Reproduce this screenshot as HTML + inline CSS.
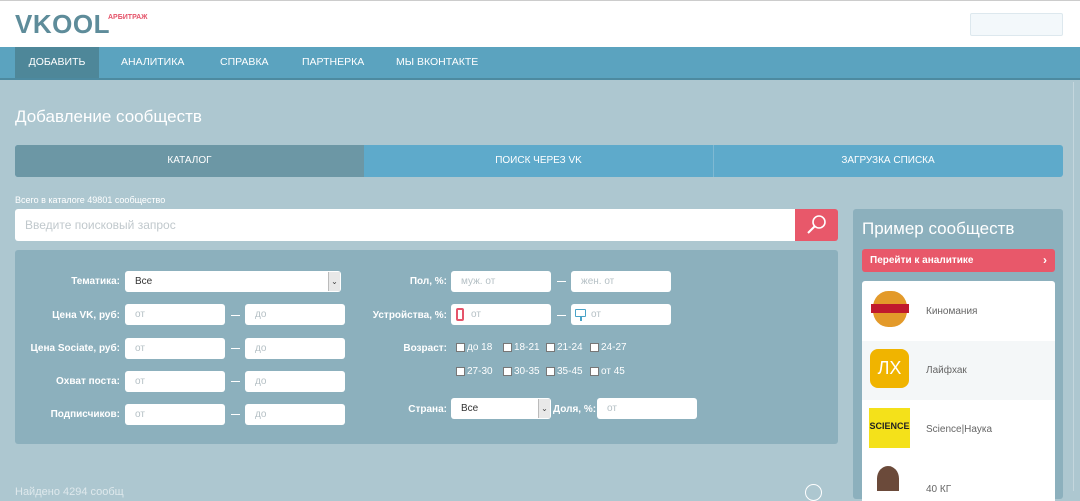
<!DOCTYPE html>
<html><head><meta charset="utf-8"><style>
*{margin:0;padding:0;box-sizing:border-box}
body{width:1080px;height:491px;overflow:hidden;background:#adc7d0;font-family:"Liberation Sans",sans-serif;position:relative}
.a{position:absolute}
.hdr{left:0;top:0;width:1080px;height:47px;background:#fff;border-top:1px solid #ccc}
.nav{left:0;top:47px;width:1080px;height:33px;background:#5ba3bf;border-bottom:2px solid #4d8aa0}
.nav span{position:absolute;top:0;height:31px;line-height:31px;color:#fff;font-size:10.5px}
.lbl{color:#fff;font-size:10px;font-weight:bold;text-align:right;white-space:nowrap}
.in{background:#fff;border-radius:3px;height:21px;color:#b5c0c5;font-size:10px;line-height:21px;padding-left:10px}
.dash{width:9px;height:1px;background:#fff}
.cb{width:9px;height:9px;background:#fff;border:1px solid #777}
.ct{color:#fff;font-size:10px}
</style></head><body>
<div class="a hdr"></div>
<div class="a" style="left:15px;top:9px;font-size:26px;font-weight:bold;color:#5e8c9a;letter-spacing:0.5px">VKOOL</div>
<div class="a" style="left:108px;top:14px;font-size:7px;font-weight:bold;color:#e5546a">АРБИТРАЖ</div>
<div class="a" style="left:970px;top:13px;width:93px;height:23px;border:1px solid #dde8ee;background:#f3f8fb;border-radius:2px"></div>
<div class="a nav">
<span style="left:15px;width:84px;background:#4e8799;text-align:center">ДОБАВИТЬ</span>
<span style="left:121px">АНАЛИТИКА</span>
<span style="left:220px">СПРАВКА</span>
<span style="left:302px">ПАРТНЕРКА</span>
<span style="left:396px">МЫ ВКОНТАКТЕ</span>
</div>
<div class="a" style="left:1073px;top:82px;width:1px;height:409px;background:#c4d6dd"></div>
<div class="a" style="left:15px;top:107px;font-size:17px;color:#fff">Добавление сообществ</div>
<div class="a" style="left:15px;top:145px;width:1048px;height:32px;border-radius:3px;overflow:hidden;background:#5eaacb">
<div class="a" style="left:0;top:0;width:349px;height:32px;background:#6c97a5"></div>
<div class="a ct" style="left:0;width:349px;top:10px;text-align:center">КАТАЛОГ</div>
<div class="a ct" style="left:349px;width:349px;top:10px;text-align:center">ПОИСК ЧЕРЕЗ VK</div>
<div class="a" style="left:698px;top:0;width:1px;height:32px;background:#7fb9d3"></div>
<div class="a ct" style="left:698px;width:350px;top:10px;text-align:center">ЗАГРУЗКА СПИСКА</div>
</div>
<div class="a" style="left:15px;top:195px;font-size:9px;color:#fff">Всего в каталоге 49801 сообщество</div>
<div class="a" style="left:15px;top:209px;width:781px;height:32px;background:#fff;border-radius:3px 0 0 3px;color:#c0c8cc;font-size:12px;line-height:32px;padding-left:10px">Введите поисковый запрос</div>
<div class="a" style="left:795px;top:209px;width:43px;height:32px;background:#e8586a;border-radius:0 3px 3px 0">
<svg width="43" height="32"><circle cx="24" cy="13" r="6" fill="none" stroke="#fff" stroke-width="1.6"/><line x1="19.5" y1="17.5" x2="13" y2="24" stroke="#fff" stroke-width="2"/></svg></div>
<div class="a" style="left:15px;top:250px;width:823px;height:194px;background:#8cb0bd;border-radius:3px"></div>
<div class="a lbl" style="left:0;width:120px;top:276px">Тематика:</div>
<div class="a in" style="left:125px;top:271px;width:216px;color:#333">Все</div>
<div class="a" style="left:328px;top:272px;width:12px;height:19px;background:#e8e8e8;border-left:1px solid #bbb;font-size:8px;text-align:center;line-height:19px;color:#444">⌄</div>
<div class="a lbl" style="left:0;width:120px;top:310px">Цена VK, руб:</div>
<div class="a lbl" style="left:0;width:120px;top:343px">Цена Sociate, руб:</div>
<div class="a lbl" style="left:0;width:120px;top:376px">Охват поста:</div>
<div class="a lbl" style="left:0;width:120px;top:409px">Подписчиков:</div>
<div class="a in" style="left:125px;top:304px;width:100px">от</div><div class="a dash" style="left:231px;top:315px"></div><div class="a in" style="left:245px;top:304px;width:100px">до</div>
<div class="a in" style="left:125px;top:338px;width:100px">от</div><div class="a dash" style="left:231px;top:348px"></div><div class="a in" style="left:245px;top:338px;width:100px">до</div>
<div class="a in" style="left:125px;top:371px;width:100px">от</div><div class="a dash" style="left:231px;top:381px"></div><div class="a in" style="left:245px;top:371px;width:100px">до</div>
<div class="a in" style="left:125px;top:404px;width:100px">от</div><div class="a dash" style="left:231px;top:414px"></div><div class="a in" style="left:245px;top:404px;width:100px">до</div>
<div class="a lbl" style="left:300px;width:147px;top:276px">Пол, %:</div>
<div class="a in" style="left:451px;top:271px;width:100px">муж. от</div><div class="a dash" style="left:557px;top:281px"></div><div class="a in" style="left:571px;top:271px;width:100px">жен. от</div>
<div class="a lbl" style="left:300px;width:147px;top:310px">Устройства, %:</div>
<div class="a in" style="left:451px;top:304px;width:100px;padding-left:20px">от</div>
<div class="a" style="left:456px;top:308px;width:8px;height:13px;border:2px solid #e5546a;border-radius:2px"></div>
<div class="a dash" style="left:557px;top:315px"></div>
<div class="a in" style="left:571px;top:304px;width:100px;padding-left:20px">от</div>
<div class="a" style="left:575px;top:309px;width:11px;height:8px;border:1.5px solid #4aa3c7;border-radius:1px"></div>
<div class="a" style="left:580px;top:317px;width:2px;height:4px;background:#4aa3c7"></div>
<div class="a lbl" style="left:300px;width:147px;top:343px">Возраст:</div>
<div class="a cb" style="left:456px;top:343px"></div><div class="a ct" style="left:467px;top:342px">до 18</div>
<div class="a cb" style="left:503px;top:343px"></div><div class="a ct" style="left:514px;top:342px">18-21</div>
<div class="a cb" style="left:546px;top:343px"></div><div class="a ct" style="left:557px;top:342px">21-24</div>
<div class="a cb" style="left:590px;top:343px"></div><div class="a ct" style="left:601px;top:342px">24-27</div>
<div class="a cb" style="left:456px;top:367px"></div><div class="a ct" style="left:467px;top:366px">27-30</div>
<div class="a cb" style="left:503px;top:367px"></div><div class="a ct" style="left:514px;top:366px">30-35</div>
<div class="a cb" style="left:546px;top:367px"></div><div class="a ct" style="left:557px;top:366px">35-45</div>
<div class="a cb" style="left:590px;top:367px"></div><div class="a ct" style="left:601px;top:366px">от 45</div>
<div class="a lbl" style="left:300px;width:147px;top:404px">Страна:</div>
<div class="a in" style="left:451px;top:398px;width:100px;color:#333">Все</div>
<div class="a" style="left:538px;top:399px;width:12px;height:19px;background:#e8e8e8;border-left:1px solid #bbb;font-size:8px;text-align:center;line-height:19px;color:#444">⌄</div>
<div class="a lbl" style="left:553px;top:404px">Доля, %:</div>
<div class="a in" style="left:597px;top:398px;width:100px">от</div>
<div class="a" style="left:15px;top:486px;font-size:11px;color:#fff;opacity:.6">Найдено 4294 сообщ</div>
<div class="a" style="left:805px;top:484px;width:17px;height:17px;border:1.5px solid #fff;border-radius:50%"></div>
<div class="a" style="left:853px;top:209px;width:210px;height:290px;background:#8cb0bd;border-radius:3px"></div>
<div class="a" style="left:862px;top:219px;font-size:17px;color:#fff">Пример сообществ</div>
<div class="a" style="left:862px;top:249px;width:193px;height:23px;background:#e8586a;border-radius:3px;color:#fff;font-size:10px;font-weight:bold;line-height:23px;padding-left:8px">Перейти к аналитике<span style="position:absolute;right:8px;font-size:12px">›</span></div>
<div class="a" style="left:862px;top:281px;width:193px;height:220px;background:#fff;border-radius:3px 3px 0 0"></div>
<div class="a" style="left:862px;top:341px;width:193px;height:59px;background:#f4f7f8"></div>
<div class="a" style="left:873px;top:291px;width:34px;height:36px;border-radius:45%;background:#e39a2a"></div>
<div class="a" style="left:871px;top:304px;width:38px;height:9px;background:#c0192d"></div>
<div class="a ct" style="left:926px;top:306px;color:#666">Киномания</div>
<div class="a" style="left:870px;top:349px;width:39px;height:39px;border-radius:8px;background:#f0b400;color:#fff;font-size:18px;line-height:39px;text-align:center">ЛХ</div>
<div class="a ct" style="left:926px;top:365px;color:#666">Лайфхак</div>
<div class="a" style="left:869px;top:408px;width:41px;height:40px;background:#f4e11a;font-size:9px;font-weight:bold;text-align:center;padding-top:13px;color:#222">SCIENCE</div>
<div class="a ct" style="left:926px;top:424px;color:#666">Science|Наука</div>
<div class="a" style="left:877px;top:466px;width:22px;height:25px;background:#6b4a3a;border-radius:50% 50% 0 0"></div>
<div class="a ct" style="left:926px;top:484px;color:#666">40 КГ</div>
</body></html>
